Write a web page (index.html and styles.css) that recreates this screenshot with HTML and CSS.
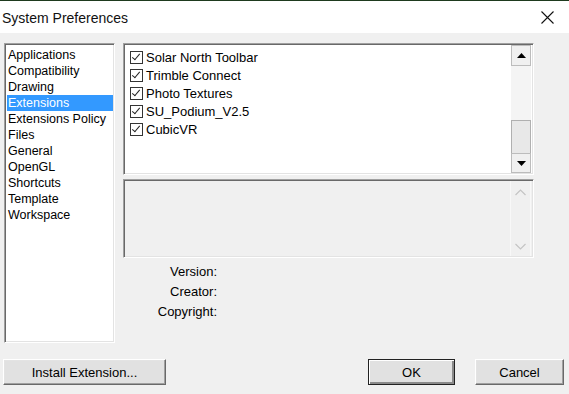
FILE: index.html
```html
<!DOCTYPE html>
<html lang="en">

<head>
    <meta charset="UTF-8">
    <meta name="viewport" content="width=device-width, initial-scale=1.0">
    <title>System Preferences</title>
    <link rel="stylesheet" href="styles.css">
</head>

<body>
    <div class="dialog">
        <div class="titlebar">
            <span class="title">System Preferences</span>
            <svg class="close" width="13" height="13" viewBox="0 0 13 13">
                <path d="M0.5 0.5 L12.5 12.5 M12.5 0.5 L0.5 12.5" stroke="#111" stroke-width="1.1" fill="none" />
            </svg>
        </div>

        <div class="main">
            <ul class="categories">
                <li>Applications</li>
                <li>Compatibility</li>
                <li>Drawing</li>
                <li class="selected">Extensions</li>
                <li>Extensions Policy</li>
                <li>Files</li>
                <li>General</li>
                <li>OpenGL</li>
                <li>Shortcuts</li>
                <li>Template</li>
                <li>Workspace</li>
            </ul>

            <div class="panel">
                <div class="ext-list">
                    <div class="ext-items">
                        <div class="ext-row"><span class="check"></span>Solar North Toolbar</div>
                        <div class="ext-row"><span class="check"></span>Trimble Connect</div>
                        <div class="ext-row"><span class="check"></span>Photo Textures</div>
                        <div class="ext-row"><span class="check"></span>SU_Podium_V2.5</div>
                        <div class="ext-row"><span class="check"></span>CubicVR</div>
                    </div>
                    <div class="scrollbar">
                        <div class="sb-btn">
                            <svg width="9" height="5" viewBox="0 0 9 5"><path d="M4.5 0 L9 5 L0 5 Z" fill="#000" /></svg>
                        </div>
                        <div class="sb-track"></div>
                        <div class="sb-thumb"></div>
                        <div class="sb-btn">
                            <svg width="9" height="5" viewBox="0 0 9 5"><path d="M0 0 L9 0 L4.5 5 Z" fill="#000" /></svg>
                        </div>
                    </div>
                </div>

                <div class="desc">
                    <div class="desc-scroll">
                        <svg width="11" height="7" viewBox="0 0 11 7"><path d="M0.5 6 L5.5 1 L10.5 6" stroke="#c4c4c4" stroke-width="1.2" fill="none" /></svg>
                        <svg width="11" height="7" viewBox="0 0 11 7"><path d="M0.5 1 L5.5 6 L10.5 1" stroke="#c4c4c4" stroke-width="1.2" fill="none" /></svg>
                    </div>
                </div>

                <div class="info">
                    <div class="info-row"><span class="label">Version:</span></div>
                    <div class="info-row"><span class="label">Creator:</span></div>
                    <div class="info-row"><span class="label">Copyright:</span></div>
                </div>
            </div>
        </div>

        <div class="buttons">
            <button class="btn install">Install Extension...</button>
            <button class="btn ok">OK</button>
            <button class="btn cancel">Cancel</button>
        </div>
    </div>
</body>

</html>
```

FILE: styles.css
```css
body {
    margin: 0;
    padding: 0;
    background-color: #f0f0f0;
    font-family: "Liberation Sans", Arial, sans-serif;
    font-size: 13px;
    color: #000;
}

.dialog {
    height: 394px;
    display: flex;
    flex-direction: column;
    overflow: hidden;
}

.titlebar {
    height: 32px;
    background: white;
    border-top: 1px solid #1e3a1e;
    display: flex;
    align-items: center;
    justify-content: space-between;
    padding: 0 15px 0 2px;
}

.title {
    font-size: 14px;
    color: #111;
    margin-top: 2px;
}

.main {
    display: flex;
    padding: 10px 0 0 4px;
}

.categories {
    list-style: none;
    margin: 0;
    padding: 3px 0 0 0;
    width: 111px;
    height: 300px;
    box-sizing: border-box;
    background: white;
    border-top: 1px solid #a0a0a0;
    border-left: 1px solid #a0a0a0;
    border-right: 1px solid #fff;
    border-bottom: 1px solid #fff;
    box-shadow: inset 1px 1px 0 #696969, inset -1px -1px 0 #e3e3e3;
    font-size: 12.5px;
}

.categories li {
    height: 16px;
    line-height: 16px;
    padding-left: 1px;
    margin: 0 1px 0 2px;
    white-space: nowrap;
}

.categories li.selected {
    background-color: #3399ff;
    color: white;
}

.panel {
    margin-left: 8px;
    width: 411px;
}

.ext-list {
    height: 132px;
    box-sizing: border-box;
    display: flex;
    background: white;
    border-top: 1px solid #a0a0a0;
    border-left: 1px solid #a0a0a0;
    border-right: 1px solid #fff;
    border-bottom: 1px solid #fff;
    box-shadow: inset 1px 1px 0 #696969, inset -1px -1px 0 #e3e3e3;
    padding: 1px;
}

.ext-items {
    flex: 1;
    padding: 3px 0 0 5px;
}

.ext-row {
    height: 18px;
    display: flex;
    align-items: center;
    white-space: nowrap;
}

.check {
    width: 13px;
    height: 13px;
    box-sizing: border-box;
    border: 1px solid #333;
    background: white;
    margin-right: 3px;
    position: relative;
}

.check::after {
    content: "";
    position: absolute;
    left: 3px;
    top: 0px;
    width: 3px;
    height: 7px;
    border-right: 1.5px solid #222;
    border-bottom: 1.5px solid #222;
    transform: rotate(40deg);
}

.scrollbar {
    width: 20px;
    display: flex;
    flex-direction: column;
    background: #f4f4f4;
    margin-right: 1px;
}

.sb-btn {
    height: 20px;
    box-sizing: border-box;
    border: 1px solid #bcbcbc;
    background: #f0f0f0;
    display: flex;
    align-items: center;
    justify-content: center;
}

.sb-btn:first-child {
    height: 21px;
}

.sb-track {
    flex: 1;
}

.sb-thumb {
    height: 33px;
    box-sizing: border-box;
    border: 1px solid #b0b0b0;
    border-bottom: none;
    background: #e8e8e8;
}

.desc {
    margin-top: 4px;
    height: 79px;
    box-sizing: border-box;
    display: flex;
    justify-content: flex-end;
    border-top: 1px solid #a0a0a0;
    border-left: 1px solid #a0a0a0;
    border-right: 1px solid #fff;
    border-bottom: 1px solid #fff;
    box-shadow: inset 1px 1px 0 #696969, inset -1px -1px 0 #e3e3e3;
    padding: 1px 2px 1px 1px;
}

.desc-scroll {
    width: 19px;
    border-left: 1px solid #f8f8f8;
    border-right: 1px solid #f8f8f8;
    display: flex;
    flex-direction: column;
    justify-content: space-between;
    align-items: center;
    padding: 8px 0 6px;
}

.info {
    margin-top: 4px;
}

.info-row {
    height: 20px;
    line-height: 20px;
}

.label {
    display: inline-block;
    width: 94px;
    text-align: right;
}

.buttons {
    margin-top: auto;
    display: flex;
    padding: 0 5px 9px 3px;
}

.btn {
    height: 26px;
    font-family: "Liberation Sans", Arial, sans-serif;
    font-size: 13px;
    color: #000;
    background-color: #e1e1e1;
    border-top: 1px solid #fff;
    border-left: 1px solid #fff;
    border-right: 1px solid #696969;
    border-bottom: 1px solid #696969;
    box-shadow: inset -1px -1px 0 #a0a0a0, inset 1px 1px 0 #e3e3e3;
    padding: 0;
}

.install {
    width: 163px;
}

.ok {
    width: 87px;
    margin-left: auto;
    border: 1px solid #222;
    box-shadow: inset 1px 1px 0 #fff, inset -2px -2px 0 #8a8a8a;
}

.cancel {
    width: 89px;
    margin-left: 20px;
}
```
